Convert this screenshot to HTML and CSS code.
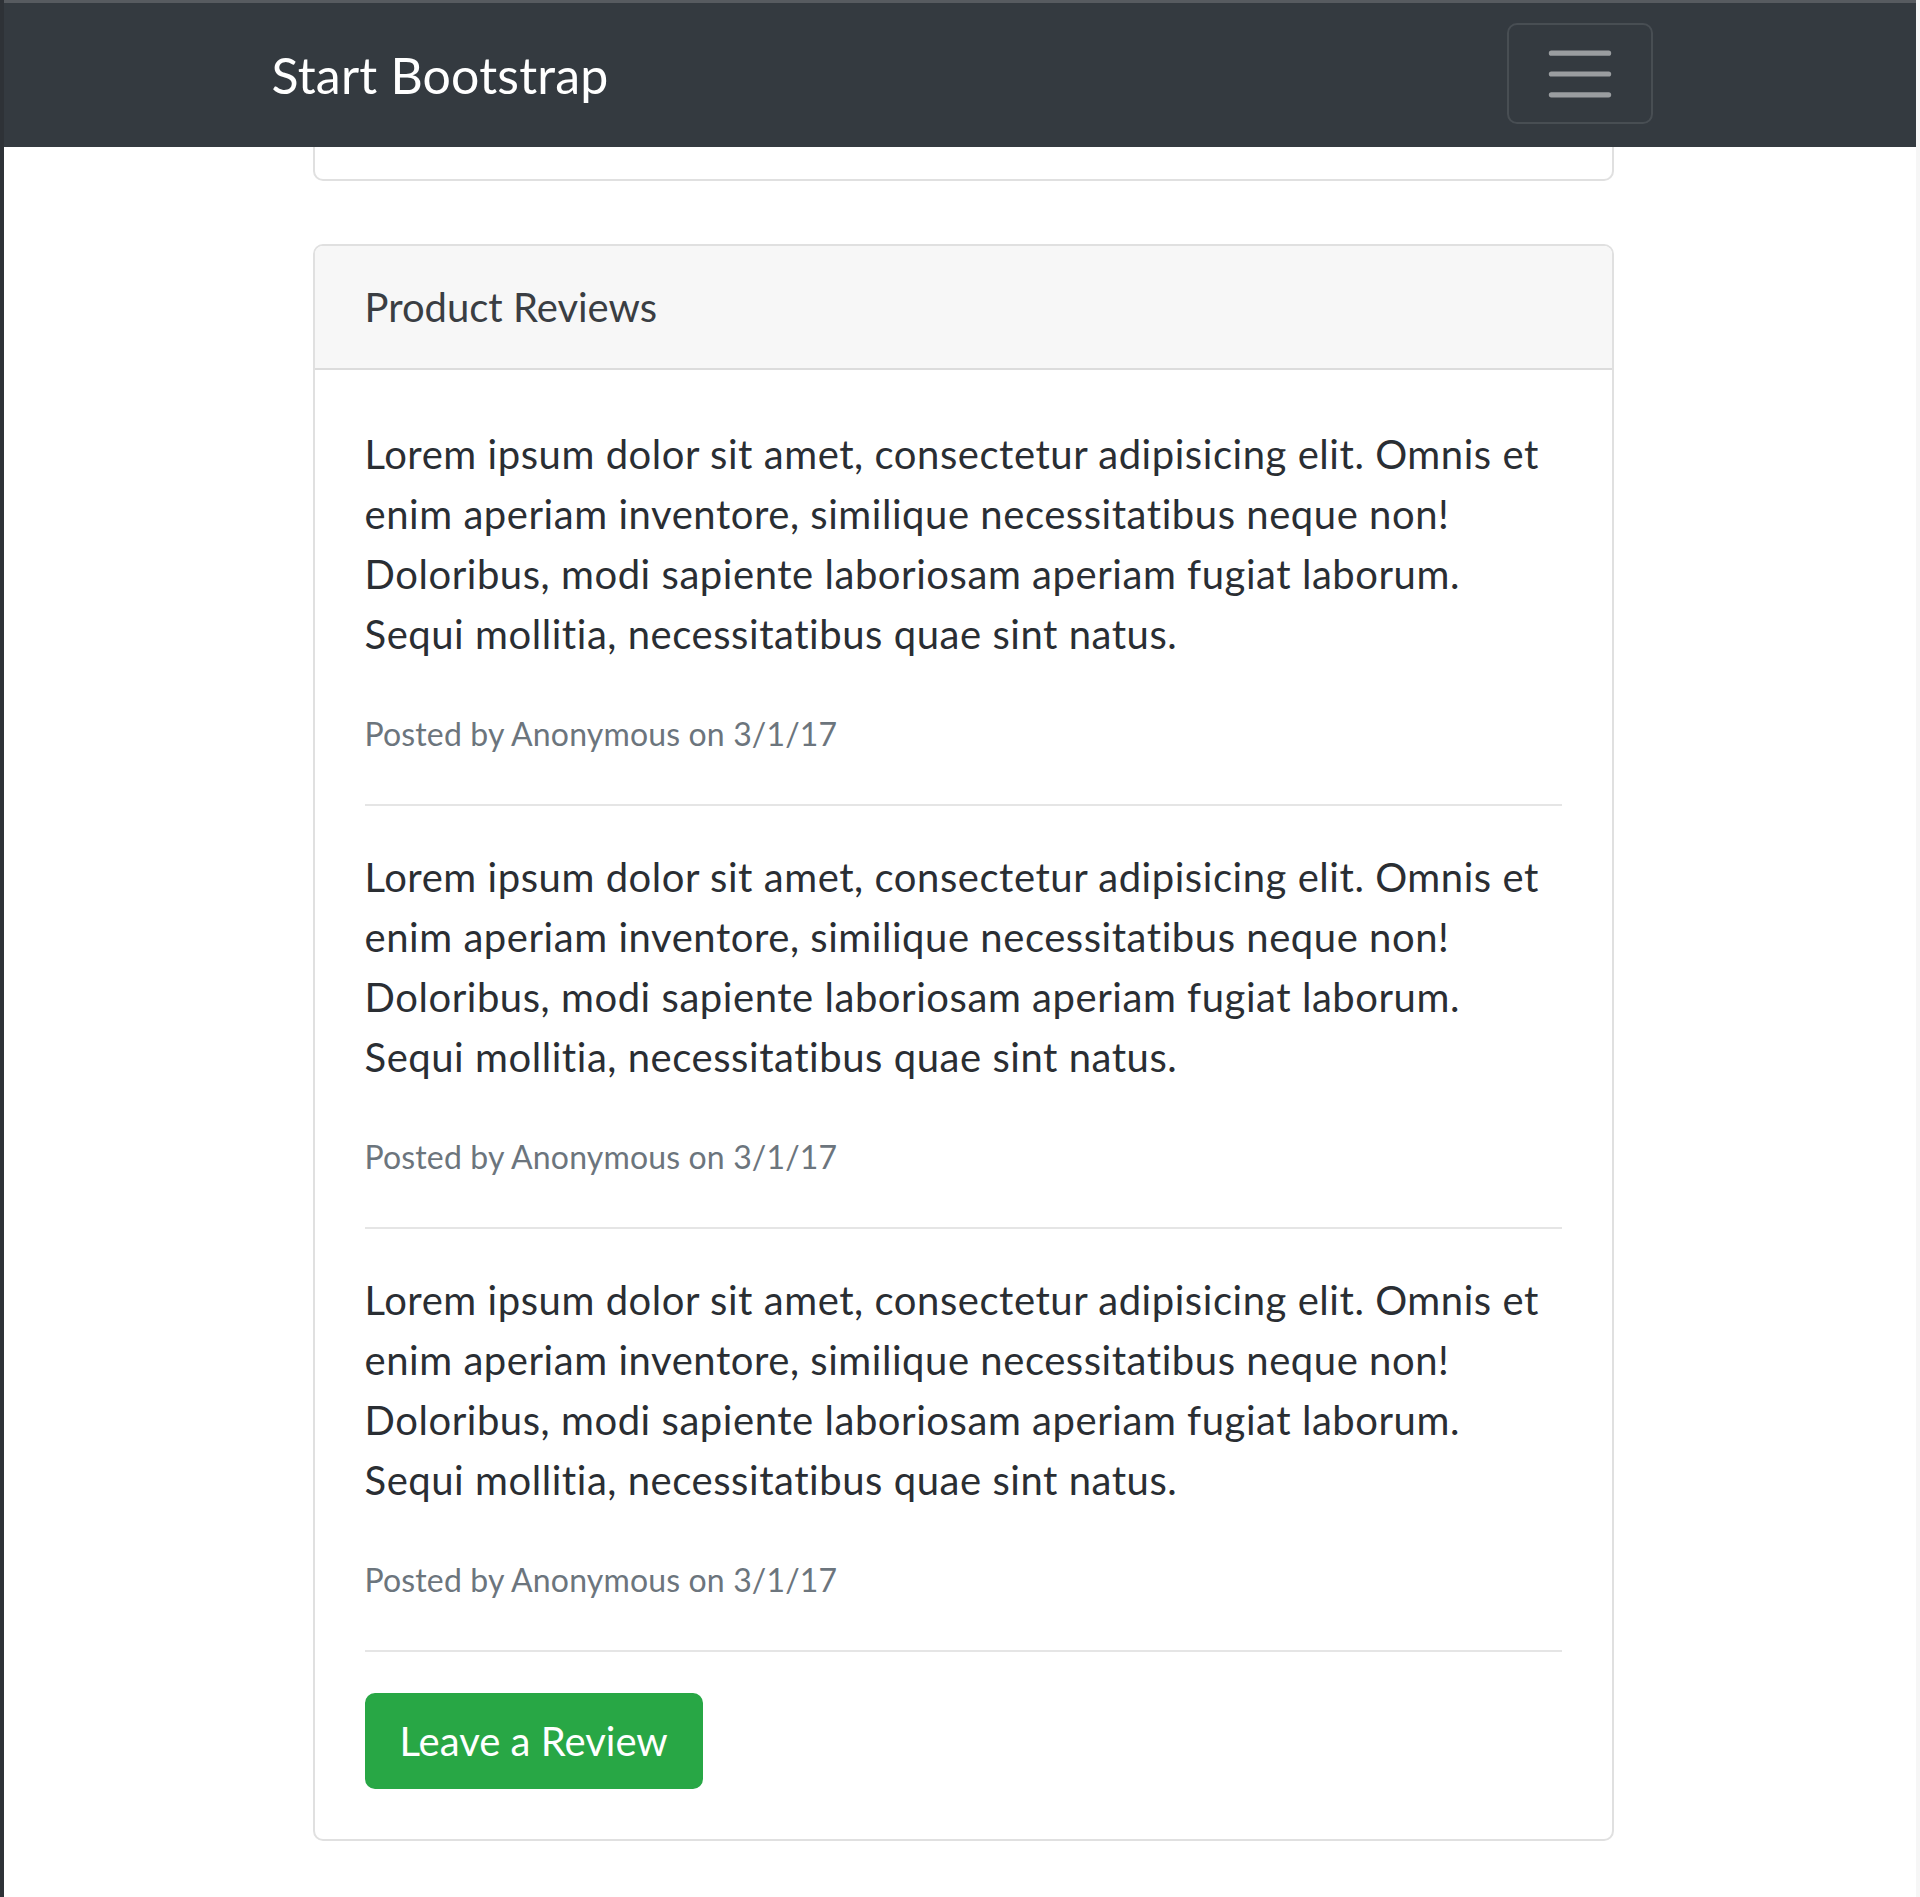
FILE: index.html
```html
<!DOCTYPE html>
<html lang="en">
<head>
    <meta charset="UTF-8">
    <meta name="viewport" content="width=device-width, initial-scale=1.0">
    <title>Shop Item - Start Bootstrap</title>
    <link rel="stylesheet" href="styles.css">
</head>
<body>
    <nav class="navbar">
        <div class="navbar-inner">
            <a class="brand" href="#">Start Bootstrap</a>
            <button class="toggler" type="button" aria-label="Toggle navigation">
                <svg class="toggler-icon" viewBox="0 0 30 30" xmlns="http://www.w3.org/2000/svg">
                    <path d="M4 7h22M4 15h22M4 23h22" stroke="rgba(255,255,255,0.5)" stroke-width="2" stroke-linecap="round" stroke-miterlimit="10"/>
                </svg>
            </button>
        </div>
    </nav>

    <main class="page">
        <div class="column">
            <div class="card card-tail"></div>

            <div class="card reviews">
                <div class="card-header">Product Reviews</div>
                <div class="card-body">
                    <p>Lorem ipsum dolor sit amet, consectetur adipisicing elit. Omnis et enim aperiam inventore, similique necessitatibus neque non! Doloribus, modi sapiente laboriosam aperiam fugiat laborum. Sequi mollitia, necessitatibus quae sint natus.</p>
                    <small class="muted">Posted by Anonymous on 3/1/17</small>
                    <hr>
                    <p>Lorem ipsum dolor sit amet, consectetur adipisicing elit. Omnis et enim aperiam inventore, similique necessitatibus neque non! Doloribus, modi sapiente laboriosam aperiam fugiat laborum. Sequi mollitia, necessitatibus quae sint natus.</p>
                    <small class="muted">Posted by Anonymous on 3/1/17</small>
                    <hr>
                    <p>Lorem ipsum dolor sit amet, consectetur adipisicing elit. Omnis et enim aperiam inventore, similique necessitatibus neque non! Doloribus, modi sapiente laboriosam aperiam fugiat laborum. Sequi mollitia, necessitatibus quae sint natus.</p>
                    <small class="muted">Posted by Anonymous on 3/1/17</small>
                    <hr>
                    <a href="#" class="btn-success">Leave a Review</a>
                </div>
            </div>
        </div>
    </main>
</body>
</html>
```

FILE: styles.css
```css
html {
    background: #fff;
}
body {
    margin: 0;
    min-height: 1897px;
    box-sizing: border-box;
    border-left: 4px solid #2e3237;
    border-right: 4px solid #f6f6f6;
    font-family: Lato, "Open Sans", sans-serif;
    font-size: 40px;
    line-height: 60px;
    letter-spacing: 0.55px;
    color: #2a2e33;
}
.navbar {
    background-color: #343a40;
    border-top: 3px solid #575b60;
    height: 147px;
    box-sizing: border-box;
    padding: 20px 0;
}
.navbar-inner {
    width: 1381px;
    margin: 0 auto;
    padding-left: 4px;
    display: flex;
    justify-content: space-between;
    align-items: center;
}
.brand {
    color: #fff;
    font-size: 50px;
    line-height: 75px;
    letter-spacing: 0.2px;
    text-decoration: none;
    margin-top: 4px;
}
.toggler {
    width: 146px;
    height: 101px;
    padding: 0;
    background: transparent;
    border: 2px solid rgba(255, 255, 255, 0.1);
    border-radius: 10px;
    display: flex;
    justify-content: center;
    align-items: center;
}
.toggler-icon {
    width: 78px;
    height: 78px;
}
.page {
    padding-left: 6px;
}
.column {
    width: 1301px;
    margin: 0 auto;
}
.card {
    background: #fff;
    border: 2px solid #e0e0e0;
    border-radius: 10px;
}
.card-tail {
    height: 32px;
    border-top: none;
    border-top-left-radius: 0;
    border-top-right-radius: 0;
}
.reviews {
    margin-top: 63px;
}
.card-header {
    background: #f7f7f7;
    padding: 31px 50px;
    border-bottom: 2px solid #dcdcdc;
    border-radius: 8px 8px 0 0;
    color: #3a3e43;
    letter-spacing: 0;
}
.card-body {
    padding: 54px 50px 50px;
}
.card-body p {
    margin: 0 0 40px;
}
.muted {
    display: block;
    font-size: 32px;
    color: #6c757d;
    letter-spacing: 0.15px;
}
hr {
    margin: 40px 0 41px;
    border: 0;
    border-top: 2px solid #e5e5e5;
}
.btn-success {
    display: inline-block;
    background-color: #28a745;
    color: #fff;
    text-decoration: none;
    padding: 16px 33px;
    border: 2px solid #28a745;
    border-radius: 10px;
    letter-spacing: 0;
}
```
